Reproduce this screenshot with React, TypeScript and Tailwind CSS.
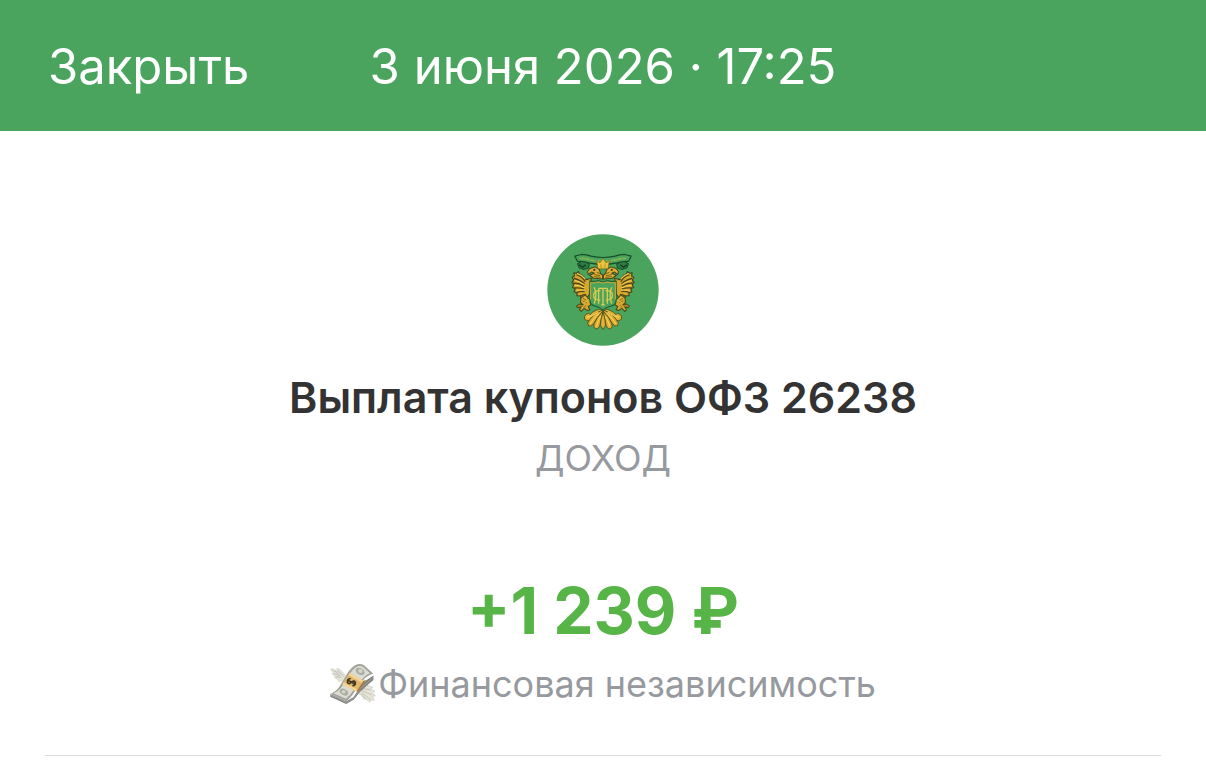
import type { ReactNode } from 'react';

const OPERATION = {
  date: '3 июня 2026 · 17:25',
  title: 'Выплата купонов ОФЗ 26238',
  kind: 'ДОХОД',
  amount: '+1 239 ₽',
  goal: 'Финансовая независимость',
};

export default function App() {
  return (
    <div className="min-h-screen bg-white font-['Inter',sans-serif]">
      <header className="grid grid-cols-[1fr_auto_1fr] items-center bg-[#4aa45d] px-12 pt-[35px] pb-8 text-white">
        <button type="button" className="justify-self-start text-[49px] leading-[64px]">
          Закрыть
        </button>
        <h1 className="text-[49px] leading-[64px] whitespace-nowrap">{OPERATION.date}</h1>
      </header>

      <main className="px-[45px]">
        <section className="flex flex-col items-center border-b border-[#dcdcde] pt-[103px] pb-11 text-center">
          <MinistryEmblem />
          <h2 className="mt-6 text-[43px] leading-[54px] font-semibold text-[#333333]">{OPERATION.title}</h2>
          <p className="mt-[7px] text-[36px] leading-[54px] text-[#96999e]">{OPERATION.kind}</p>
          <p className="mt-[86px] text-[64px] leading-[80px] font-bold text-[#57b548]">{OPERATION.amount}</p>
          <p className="mt-1.5 flex items-center gap-0.5 text-[36px] leading-[54px] text-[#96999e]">
            <FlyingCash />
            {OPERATION.goal}
          </p>
        </section>
      </main>
    </div>
  );
}

/** Draws one half of a symmetric figure and its reflection about x = 189. */
function Mirrored({ children }: { children: ReactNode }) {
  return (
    <>
      <g>{children}</g>
      <g transform="translate(378 0) scale(-1 1)">{children}</g>
    </>
  );
}

function MinistryEmblem() {
  return (
    <svg viewBox="22 19 334 334" className="size-28" aria-hidden="true">
      <circle cx="189" cy="186" r="166" fill="#4aa45d" />
      {/* ribbon */}
      <Mirrored>
        <path d="M128 98l-15 10 5 12 14 5 14-5 2-12z" fill="#2d7b43" stroke="#164b27" strokeWidth="3" />
        <path d="M118 111l10 7 9-7" fill="none" stroke="#123f22" strokeWidth="4" />
      </Mirrored>
      <path
        d="M105 85l19-5q17 0 29 5 36 8 72 0 12-5 29-5l19 5-8 16q-16-2-34 4-42 9-84 0-18-6-34-4z"
        fill="#4aa45d"
        stroke="#184f2a"
        strokeWidth="3.5"
        strokeLinejoin="round"
      />
      <path
        d="M121 92q15-1 29 4 39 8 78 0 14-5 29-4"
        fill="none"
        stroke="#a3b947"
        strokeWidth="5"
        strokeDasharray="3 2 5 2 2 2"
      />
      <Mirrored>
        {/* wing */}
        <path
          d="M154 151l-15 4-13-13-7-4-3-7-6 5-8-1 2 9-7 4 5 9-6 6 6 7-4 8 8 5-3 8 9 4-1 8 11 1 2 7 10-2 6 4 9-15z"
          fill="#d9a62c"
          stroke="#3e4921"
          strokeWidth="3.5"
          strokeLinejoin="round"
        />
        <path
          d="M110 141q15 3 26 20M102 151q18 4 32 17M100 165q17 0 33 10M103 180q16-2 30 3M111 193q12-4 23-2M121 205q8-6 18-5"
          fill="none"
          stroke="#50481c"
          strokeWidth="4"
        />
        <path
          d="M112 137q14 4 24 16M104 158q16 2 29 12M104 172q16-1 30 8M110 187l25-1"
          fill="none"
          stroke="#f6cf52"
          strokeWidth="3"
        />
        {/* head and neck */}
        <path
          d="M188 153l-27-2-12-9 14-6-8-4-10 8-2-9 7-9 16-5 12 8 4 12 6 5z"
          fill="#dfae32"
          stroke="#3f441e"
          strokeWidth="3"
          strokeLinejoin="round"
        />
        <path d="M163 140l17 3M162 146l20 2M170 133l12 5" stroke="#655319" strokeWidth="2.5" />
        <circle cx="163" cy="126" r="3" fill="#393d1e" />
        {/* leg and claw */}
        <path
          d="M136 200l-13 10-1 13 8 7-11-2-9 6 4 5 10-3-5 9 5 5 9-9 10 6 7-2-5-9 8-6 1-13-9-6z"
          fill="#d9a72e"
          stroke="#3f481f"
          strokeWidth="3"
          strokeLinejoin="round"
        />
        <path d="M130 211l10 6M129 219l12 5M139 232l-8 7M115 234l14-1" stroke="#72601e" strokeWidth="2.5" />
        <path d="M133 208l8 5M132 224l13-7" stroke="#f1cc50" strokeWidth="2.5" />
        {/* tail feathers */}
        <path
          d="M187 242q-25 3-36 17-4-6-12-1-8 5-5 15 7 8 18 3 16-9 35-31z"
          fill="#e2b237"
          stroke="#474b1e"
          strokeWidth="2.5"
        />
        <path
          d="M187 246q-27 11-38 29-10 11-3 18 9 4 16-8 10-18 25-34z"
          fill="#dfac31"
          stroke="#474b1e"
          strokeWidth="2.5"
        />
        <path
          d="M189 249q-20 19-26 37-4 13 5 16 9 0 12-12 4-19 9-35z"
          fill="#dfac31"
          stroke="#474b1e"
          strokeWidth="2.5"
        />
        <path d="M175 252q-15 12-34 15M178 256q-17 14-27 31M182 264q-9 14-13 31" fill="none" stroke="#f7d35a" strokeWidth="3" />
      </Mirrored>
      <path d="M189 252q-8 26-7 40l7 12 7-12q1-14-7-40z" fill="#e3b338" stroke="#474b1e" strokeWidth="2.5" />
      {/* crown */}
      <path
        d="M174 123l-4-25 10 7 9-13 9 13 10-7-4 25z"
        fill="#edc33b"
        stroke="#765f1b"
        strokeWidth="2"
        strokeLinejoin="round"
      />
      <path d="M183 109v11M195 109v11" stroke="#9a7c24" strokeWidth="2" />
      {/* shield */}
      <path
        d="M150 160q12 2 25-2l14 4 14-4q13 4 25 2v57q0 13-16 17-15 3-23 13-8-10-23-13-16-4-16-17z"
        fill="#4aa45d"
        stroke="#236434"
        strokeWidth="4"
      />
      <path d="M152 214v-50q12 2 23-2l14 3 14-3q11 4 23 2v50" fill="none" stroke="#d0a635" strokeWidth="3" />
      {/* monogram */}
      <g fill="none" stroke="#dccb4e" strokeWidth="4">
        <path d="M189 180v49M176 181h26M184 230h10" />
        <path d="M163 178q10 24 0 48M215 178q-10 24 0 48" />
        <path d="M176 181v46M202 181v46" />
        <path d="M181 188q-20-1-20 14t20 14M197 188q20-1 20 14t-20 14" />
      </g>
    </svg>
  );
}

function FlyingCash() {
  return (
    <svg viewBox="16 20 142 128" className="h-[42px] w-[46px]" aria-hidden="true">
      {/* wings */}
      <path
        d="M70 67L61 54 47 39 37 36l2 9-15-8-6 1 7 11-3 3 10 9-2 4 11 5 1 6 11-2 6 6z"
        fill="#e5e4da"
        stroke="#bdbdb2"
        strokeWidth="1.5"
      />
      <path d="M27 42l18 12M28 52l19 6M34 62l17 1M41 43l17 18" stroke="#aaa99f" strokeWidth="2" />
      <path
        d="M105 101l10-11 16-3 18 7-7 5 13 7-7 4 8 11-8 1 5 13-10-3-4 8-12-11-6 2-8-13-7-3z"
        fill="#e6e4d8"
        stroke="#c2c0b4"
        strokeWidth="1.5"
      />
      <path d="M113 98l29 4M113 104l32 13M113 110l30 24M112 115l18 19" stroke="#b5b3a7" strokeWidth="2" />
      {/* stack edge */}
      <path d="M17 115l49 22 22-12 23-34 16-18 23-15v14L131 88l-22 20-19 24-24 14-49-23z" fill="#80817d" />
      <path d="M19 119l48 22 23-14 21-30 37-32" fill="none" stroke="#b5b5b1" strokeWidth="2" />
      {/* top note */}
      <path
        d="M17 115q21-10 29-25l19-31q15-29 35-36 11-3 21 3l29 26q-18 4-28 16l-28 37q-14 23-28 32z"
        fill="#a5a69f"
      />
      <path
        d="M24 113q20-9 28-22l19-31q16-28 33-33 9-1 15 4l22 20q-14 5-24 18L89 105q-12 17-24 26z"
        fill="#dddcd2"
        stroke="#8f918b"
        strokeWidth="2"
      />
      <ellipse cx="109" cy="45" rx="15" ry="10" transform="rotate(30 109 45)" fill="#aaaea2" />
      <ellipse cx="110" cy="44" rx="7" ry="6" fill="#d5d6cc" />
      <ellipse cx="59" cy="109" rx="14" ry="9" transform="rotate(28 59 109)" fill="#aaaea2" />
      <ellipse cx="58" cy="108" rx="6" ry="5" fill="#d5d6cc" />
      {/* band */}
      <path d="M77 50l42 24-22 33-43-22z" fill="#dfb86e" />
      <path d="M77 50l42 24-4 6-42-24zM58 79l43 22-4 6-43-22z" fill="#f3d696" />
      <path d="M119 74l8-2-22 34-8 1z" fill="#aa7838" />
      <path
        d="M78 67q-10 3-8 12 4 7 11 1 9-9 13-2 2 9-7 11M71 72l23 13"
        fill="none"
        stroke="#40351f"
        strokeWidth="5"
        strokeLinecap="round"
      />
    </svg>
  );
}
